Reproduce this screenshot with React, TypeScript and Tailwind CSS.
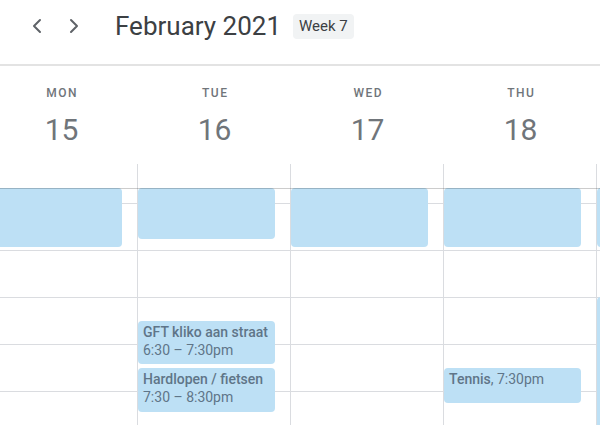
import { ChevronLeft, ChevronRight } from "lucide-react";

type CalEvent = { pos: string; title?: string; time?: string; inline?: boolean };

// the fifth column (Fri) is only a sliver at the right edge, so its header stays empty
const days: { key: string; name?: string; num?: number; events: CalEvent[] }[] = [
  { key: "mon", name: "MON", num: 15, events: [{ pos: "top-0 h-[59px]" }] },
  {
    key: "tue",
    name: "TUE",
    num: 16,
    events: [
      { pos: "top-0 h-[51px]" },
      { pos: "top-[133px] h-[43px]", title: "GFT kliko aan straat", time: "6:30 – 7:30pm" },
      { pos: "top-[180px] h-[44px]", title: "Hardlopen / fietsen", time: "7:30 – 8:30pm" },
    ],
  },
  { key: "wed", name: "WED", num: 17, events: [{ pos: "top-0 h-[59px]" }] },
  {
    key: "thu",
    name: "THU",
    num: 18,
    events: [
      { pos: "top-0 h-[59px]" },
      { pos: "top-[180px] h-[35px]", title: "Tennis", time: "7:30pm", inline: true },
    ],
  },
  { key: "fri", events: [{ pos: "top-0 h-[59px]" }, { pos: "top-[109px] h-[200px]" }] },
];

const EventCard = ({ ev }: { ev: CalEvent }) => (
  <div
    className={`absolute left-0 w-[137px] ${ev.pos} rounded-[4px] bg-[#bde0f5] px-[5px] pt-[2px] text-[14px] leading-[18px] text-[#5f7588] overflow-hidden whitespace-nowrap`}
  >
    {ev.title && ev.inline && (
      <div>
        <span className="font-medium">{ev.title}</span>, {ev.time}
      </div>
    )}
    {ev.title && !ev.inline && (
      <>
        <div className="font-medium">{ev.title}</div>
        <div>{ev.time}</div>
      </>
    )}
  </div>
);

export default function App() {
  return (
    <div className="w-[600px] h-[425px] overflow-hidden bg-white font-['Roboto','Liberation_Sans',sans-serif]">
      {/* toolbar */}
      <div className="h-[66px] pb-[12px] border-b-2 border-[#e3e3e3] flex items-center pl-[25px]">
        <ChevronLeft size={24} strokeWidth={2} className="text-[#5f6368]" />
        <ChevronRight size={24} strokeWidth={2} className="text-[#5f6368] ml-[13px]" />
        <h1 className="ml-[29px] text-[26px] leading-[32px] text-[#3c4043]">February 2021</h1>
        <span className="ml-[12px] h-[25px] px-[6px] rounded-[4px] bg-[#f1f3f4] text-[15px] leading-[25px] text-[#3c4043]">
          Week 7
        </span>
      </div>

      {/* day headers */}
      <div className="relative z-10 flex w-[765px] -ml-[15px] shadow-[0_1px_0_rgba(0,0,0,0.2)]">
        {days.map((d) => (
          <div key={d.key} className="w-[153px] flex-none flex flex-col items-center">
            <div className="mt-[19px] h-[16px] text-[12px] leading-[16px] font-medium tracking-[1.5px] pl-[1.5px] text-[#70757a]">
              {d.name}
            </div>
            <div className="mt-[11px] h-[36px] text-[30px] leading-[36px] text-[#70757a]">{d.num}</div>
            <div className="mt-[16px] h-[24px] w-full border-r border-[#dadce0]" />
          </div>
        ))}
      </div>

      {/* grid */}
      <div className="flex w-[765px] -ml-[15px] h-[237px] overflow-hidden">
        {days.map((d) => (
          <div key={d.key} className="relative w-[153px] flex-none border-r border-[#dadce0]">
            <div className="h-[16px] border-b border-[#dadce0]" />
            {[0, 1, 2, 3, 4].map((i) => (
              <div key={i} className="h-[47px] border-b border-[#dadce0]" />
            ))}
            {d.events.map((ev, i) => (
              <EventCard key={i} ev={ev} />
            ))}
          </div>
        ))}
      </div>
    </div>
  );
}
